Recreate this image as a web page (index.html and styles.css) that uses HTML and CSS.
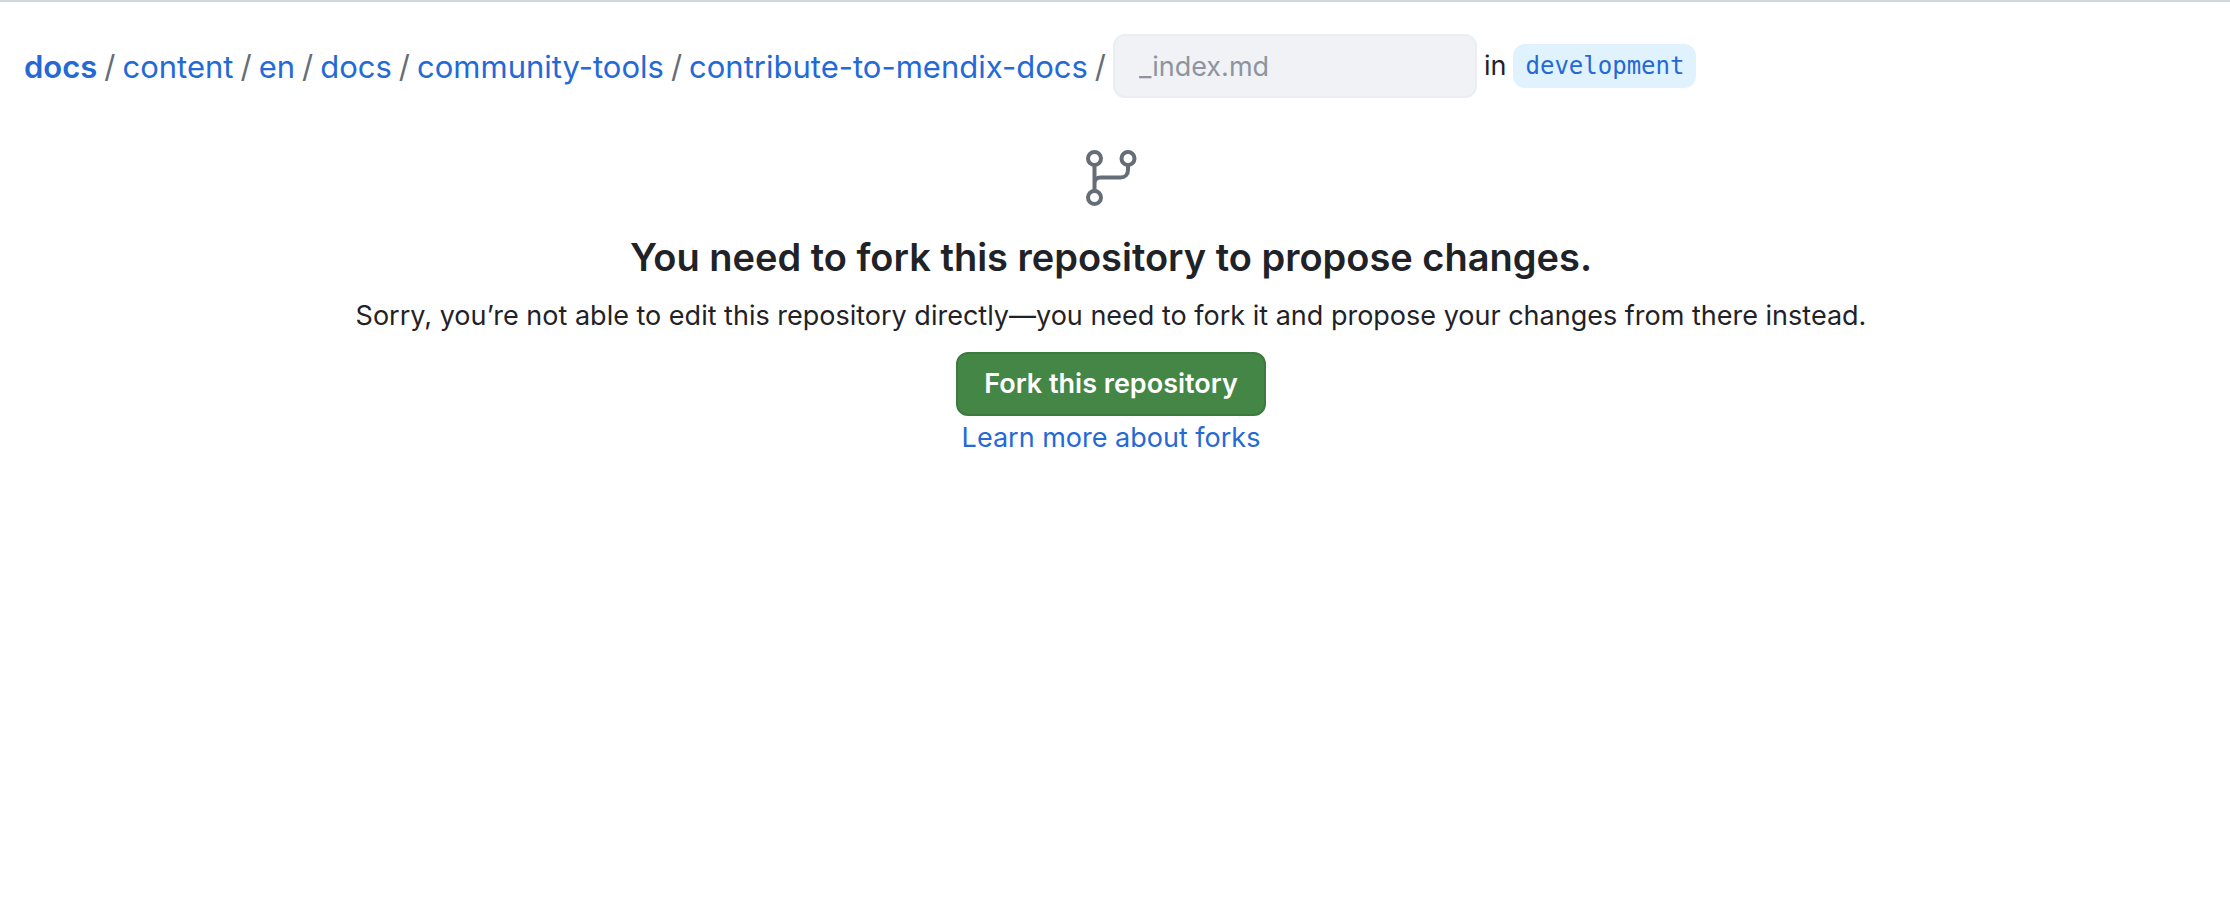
FILE: index.html
```html
<!DOCTYPE html>
<html lang="en">
<head>
<meta charset="utf-8">
<meta name="viewport" content="width=device-width, initial-scale=1">
<title>Editing docs/_index.md</title>
<link rel="stylesheet" href="styles.css">
</head>
<body>
<header class="file-header">
  <nav class="breadcrumb" aria-label="Breadcrumb">
    <a class="root" href="#">docs</a>
    <span class="separator">/</span>
    <a href="#">content</a>
    <span class="separator">/</span>
    <a href="#">en</a>
    <span class="separator">/</span>
    <a href="#">docs</a>
    <span class="separator">/</span>
    <a href="#">community-tools</a>
    <span class="separator">/</span>
    <a href="#">contribute-to-mendix-docs</a>
    <span class="separator">/</span>
  </nav>
  <input class="file-name" type="text" value="_index.md" aria-label="File name" disabled>
  <span class="in">in</span>
  <span class="branch">development</span>
</header>
<main class="blankslate">
  <svg class="branch-icon" viewBox="0 0 56 60" fill="none" stroke="currentColor" stroke-width="4" aria-hidden="true">
    <circle cx="11.500" cy="11.500" r="6.500"/>
    <circle cx="45" cy="11.500" r="6.500"/>
    <circle cx="11.500" cy="50.500" r="6.500"/>
    <path d="M11.500 18v26M11.500 36.500c0-3.500 2.500-6 6-6h20c4.500 0 7.500-3 7.500-7.500v-5"/>
  </svg>
  <h1 class="title">You need to fork this repository to propose changes.</h1>
  <p class="message">Sorry, you’re not able to edit this repository directly—you need to fork it and propose your changes from there instead.</p>
  <button class="fork-button" type="button">Fork this repository</button>
  <a class="learn-more" href="#">Learn more about forks</a>
</main>
</body>
</html>
```

FILE: styles.css
```css
* {
  box-sizing: border-box;
}

body {
  margin: 0;
  border-top: 2px solid #d0d7de;
  background: #fff;
  color: #1f2328;
  font-family: Inter, "Liberation Sans", sans-serif;
  font-size: 27px;
  line-height: 44px;
}

a {
  color: #2469d6;
  text-decoration: none;
}

a:hover {
  text-decoration: underline;
}

.file-header {
  display: flex;
  flex-wrap: wrap;
  align-items: center;
  gap: 7px;
  padding: 32px 24px 0;
}

.breadcrumb {
  display: flex;
  flex-wrap: wrap;
  gap: 7px;
  padding-top: 2px;
  font-size: 31px;
}

.root {
  font-weight: 600;
}

.separator {
  color: #656d76;
}

.file-name {
  width: 364px;
  height: 64px;
  padding: 0 24px;
  border: 2px solid #eaeef2;
  border-radius: 12px;
  background: #f0f2f6;
  color: #8c959f;
  font: inherit;
}

.branch {
  padding: 0 12px;
  border-radius: 12px;
  background: #e0f2fd;
  color: #2469d6;
  font-family: "DejaVu Sans Mono", monospace;
  font-size: 24px;
}

.blankslate {
  display: flex;
  flex-direction: column;
  align-items: center;
  padding: 49px 16px 0 8px;
  text-align: center;
}

.branch-icon {
  width: 56px;
  height: 60px;
  color: #656d76;
}

.title {
  margin: 20px 0 7px;
  font-size: 38px;
  font-weight: 600;
  line-height: 60px;
}

.message {
  margin: 0 0 14px;
}

.fork-button {
  height: 64px;
  padding: 0 26px;
  border: 2px solid #3d7a3f;
  border-radius: 12px;
  background: #438646;
  color: #fff;
  font: inherit;
  font-weight: 600;
  cursor: pointer;
}
```
